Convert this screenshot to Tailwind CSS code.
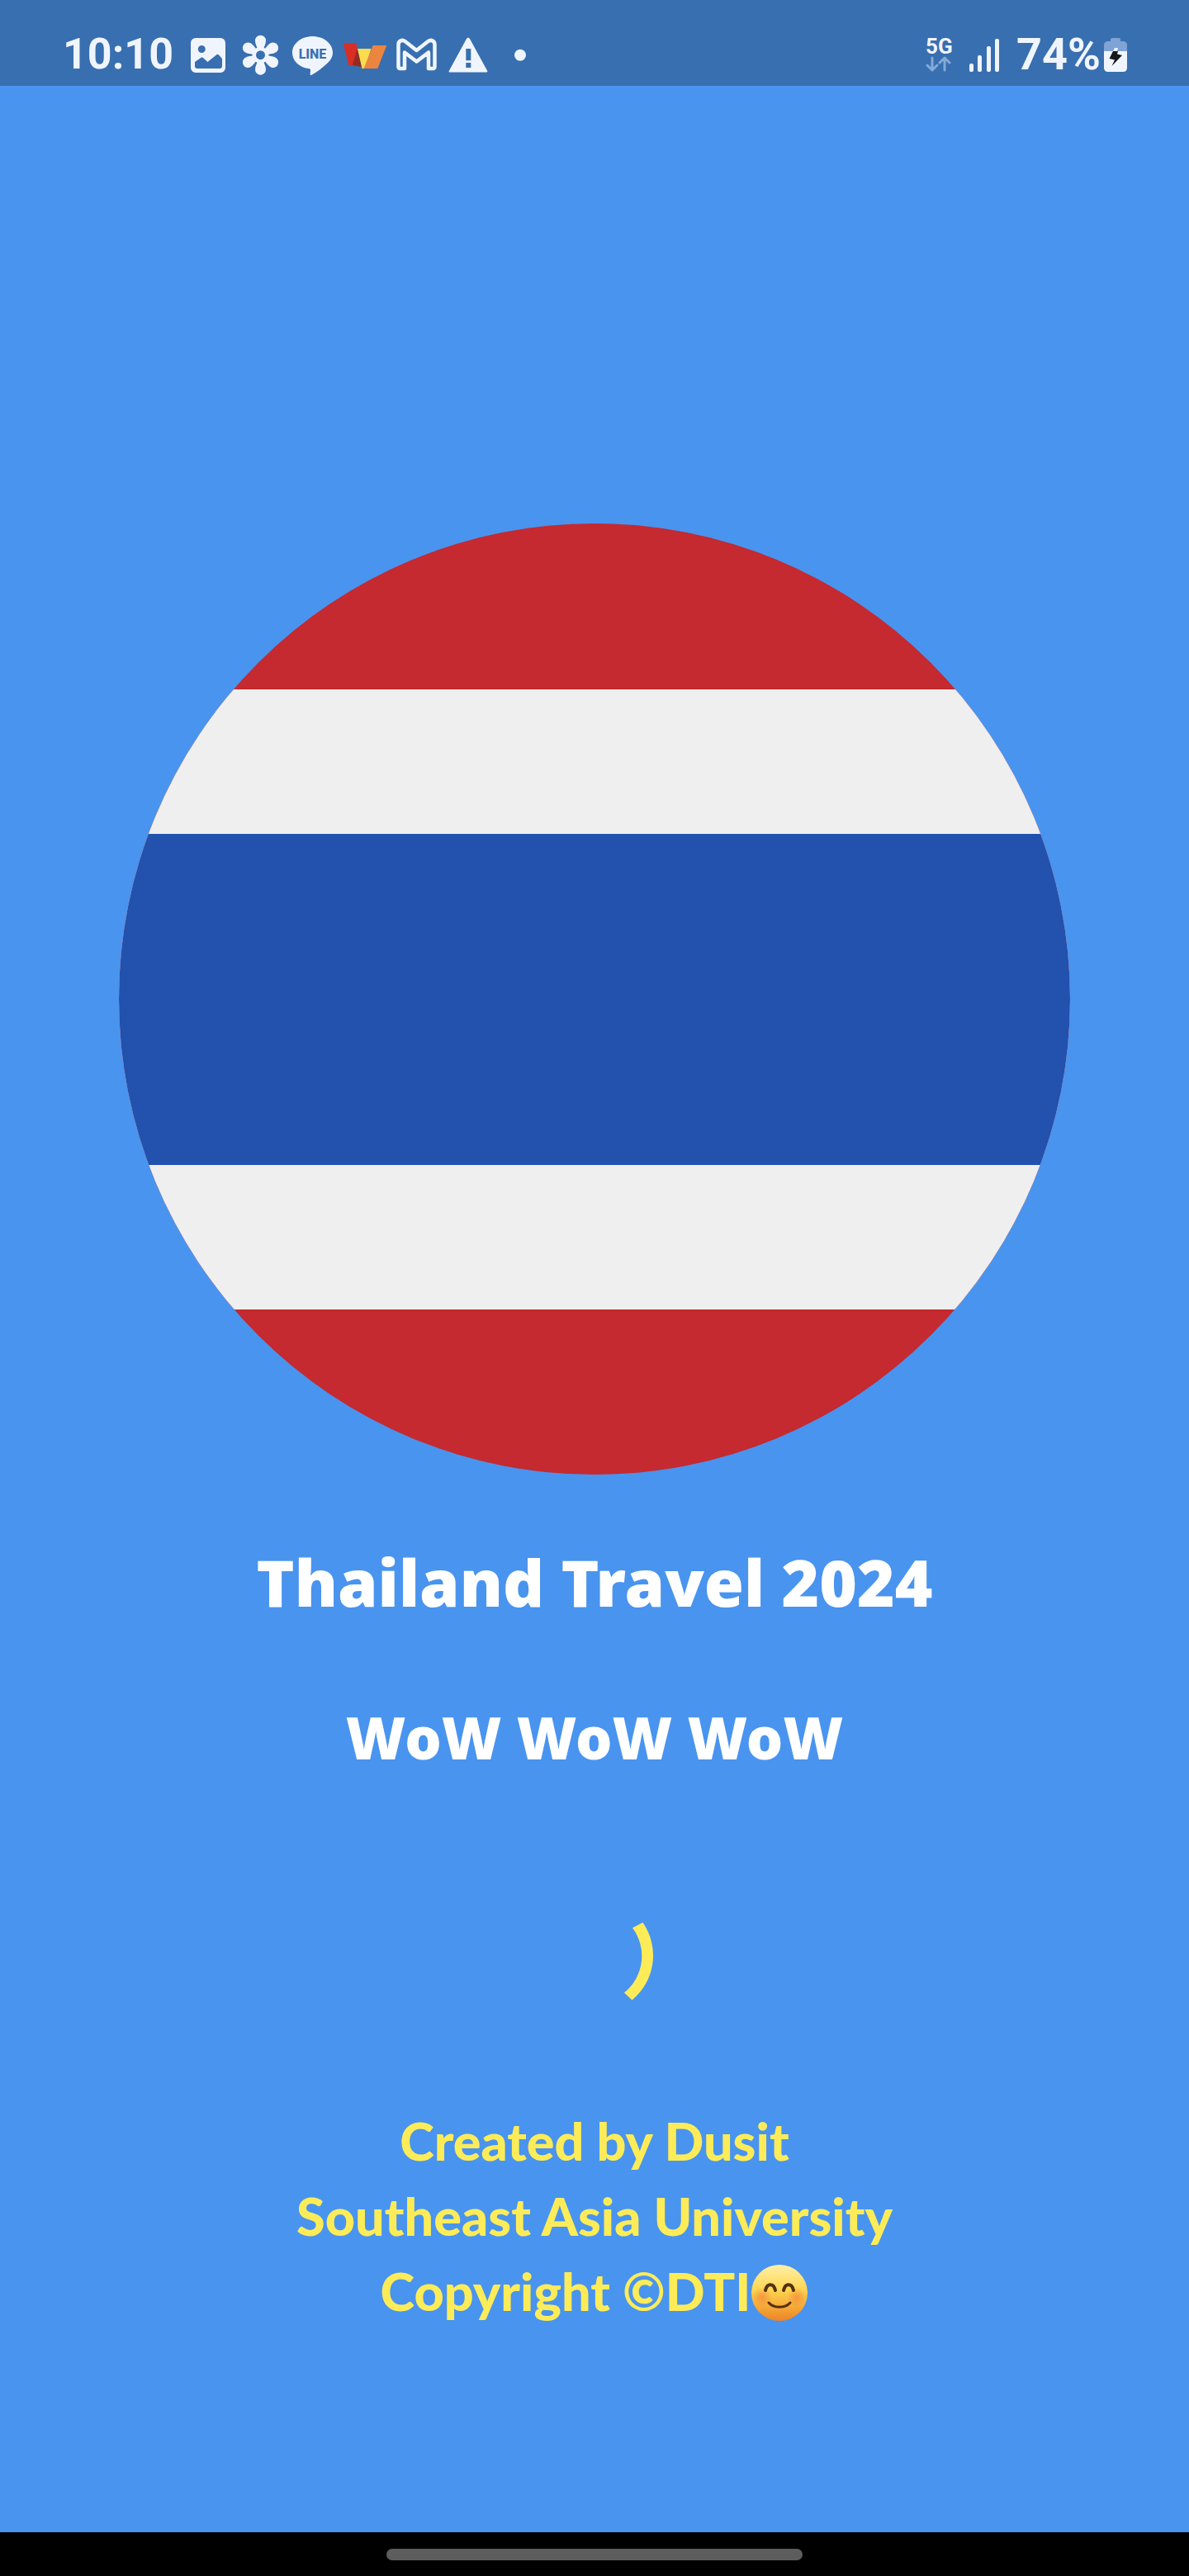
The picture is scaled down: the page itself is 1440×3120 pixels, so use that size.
<!DOCTYPE html>
<html lang="en">
<head>
<meta charset="utf-8">
<meta name="viewport" content="width=device-width, initial-scale=1">
<title>Thailand Travel 2024</title>
<script src="https://cdn.jsdelivr.net/npm/@tailwindcss/browser@4"></script>
</head>
<body class="flex min-h-screen flex-col bg-[#4994ef] font-['Noto_Sans',sans-serif]">
<header class="flex h-26 items-center justify-between bg-[#386fb0] pt-7 pr-[75px] pl-[76px] font-['Roboto',sans-serif] text-[#f0f5fd]">
  <div class="flex items-center">
    <time class="w-[148px] text-[52px] leading-14 font-bold">10:10</time>
    <div class="flex items-center gap-[7px]">
      <svg class="size-14" viewBox="0 0 56 56" fill="currentColor" aria-label="Gallery"><path fill-rule="evenodd" d="M13 8h30a6 6 0 0 1 6 6v30a6 6 0 0 1-6 6H13a6 6 0 0 1-6-6V14a6 6 0 0 1 6-6Zm7.300 9a4.500 4.500 0 1 0 0 9 4.500 4.500 0 0 0 0-9ZM12 37v5a3 3 0 0 0 3 3h27a3 3 0 0 0 3-3v-9l-4-4.500a2 2 0 0 0-3 0L27.500 37l-5-4.500a2.500 2.500 0 0 0-4 0Z"/></svg>
      <svg class="size-14" viewBox="0 0 56 56" fill="currentColor" aria-label="Photos">
        <g transform="translate(28.500 28.700)">
          <circle r="10"/>
          <path id="petal" d="M-3-6C-4-10-6.500-13-6.500-17.500a6.500 6.500 0 0 1 13 0C6.500-13 4-10 3-6Z"/>
          <use href="#petal" transform="rotate(60)"/><use href="#petal" transform="rotate(120)"/><use href="#petal" transform="rotate(180)"/><use href="#petal" transform="rotate(240)"/><use href="#petal" transform="rotate(300)"/>
          <circle r="5.500" fill="#386fb0"/>
        </g>
      </svg>
      <svg class="size-14" viewBox="0 0 56 56" fill="currentColor" aria-label="LINE"><path d="M28.500 6C42 6 53 14.800 53 25.700c0 5-2.500 9.300-7 13.300C40 44.500 33 50 27 53c-1.500.5-1.500-1-1.200-3 .6-4 .2-4.700-2.300-5C12 43.500 4 35.500 4 25.700 4 14.800 15 6 28.500 6Z"/><text x="28.500" y="33" text-anchor="middle" font-size="16" font-weight="800" fill="#386fb0">LINE</text></svg>
      <svg class="size-14" viewBox="0 0 56 56" aria-hidden="true"><path fill="#d92e26" d="M2.700 14H18l2 7-6 20H9.300Z"/><path fill="#fbdc4c" d="M20 21h16.500L29 45h-3.500Z"/><path fill="#ec8540" d="M38.700 17h16.600l-11 28H27.500Z"/><path fill="#9c2a1c" d="m19.700 21-6 20 11 2Z"/></svg>
      <svg class="size-14" viewBox="0 0 56 56" fill="none" stroke="currentColor" stroke-width="4.500" stroke-linejoin="round" aria-label="Gmail"><path d="M8.500 45H14V25.500l14.500 11 14.500-11V45h5.500a2 2 0 0 0 2-2V16c0-4.500-4.500-6.500-8-4l-14 11-14-11c-3.500-2.500-8-.5-8 4v27a2 2 0 0 0 2 2Z"/></svg>
      <svg class="size-14" viewBox="0 0 56 56" fill="currentColor" aria-label="Warning"><path fill-rule="evenodd" d="M26 9q2-3 4 0l21 38.500q1 2-1 2H6q-2 0-1-2ZM25.300 21v14.300h6V21Zm0 17v6h6v-6Z"/></svg>
      <svg class="size-14" viewBox="0 0 56 56" fill="currentColor" aria-hidden="true"><circle cx="28" cy="28.700" r="7"/></svg>
    </div>
  </div>
  <div class="flex items-center">
    <div class="flex w-[52px] flex-col">
      <span class="text-[26px] leading-6 font-bold">5G</span>
      <svg class="h-5 w-8" viewBox="0 0 32 20" fill="none" stroke="#85a9d8" stroke-width="3" stroke-linecap="round" stroke-linejoin="round" aria-hidden="true"><path d="M8 2v15M2 11l6 6 6-6M23 17V2m-6 6 6-6 6 6"/></svg>
    </div>
    <svg class="h-14 w-[58px]" viewBox="0 0 58 56" fill="currentColor" aria-label="Signal"><rect x="1" y="39" width="5" height="10" rx="2"/><rect x="11" y="29" width="5" height="20" rx="2"/><rect x="22" y="18" width="5" height="31" rx="2"/><rect x="32" y="9" width="5" height="40" rx="2"/></svg>
    <span class="text-[54px] leading-14 font-bold">74%</span>
    <svg class="ml-1 h-14 w-7" viewBox="0 0 28 56" aria-label="Battery charging"><path fill="#7fa3d4" d="M10 8h8q2 0 2 2v2h3q5 0 5 5v7H0v-7q0-5 5-5h3v-2q0-2 2-2Z"/><path fill="#f0f5fd" d="M0 24h11l2-4h4l-1 4h12v20q0 5-5 5H5q-5 0-5-5Z"/><path fill="#15181d" d="m11 24-4.500 9 6.500 1.500L9.500 42 22 29l-6-1.500 1-3.500Z"/></svg>
  </div>
</header>

<main class="flex flex-1 flex-col items-center pt-[530px] text-center">
  <svg class="w-4/5" viewBox="0 0 1152 1152" role="img" aria-label="Flag of Thailand">
    <clipPath id="disc"><circle cx="576" cy="576" r="576"/></clipPath>
    <g clip-path="url(#disc)"><path fill="#c42a30" d="M0 0h1152v1152H0z"/><path fill="#efefef" d="M0 201h1152v751H0z"/><path fill="#2251ae" d="M0 376h1152v401H0z"/></g>
  </svg>
  <h1 class="mt-[74px] text-[78px] leading-[112px] font-black text-white">Thailand Travel 2024</h1>
  <p class="mt-[76px] text-[70px] leading-[112px] font-black text-white">WoW WoW WoW</p>
  <svg class="mt-[137px] size-36" viewBox="0 0 144 144" fill="#fdec58" role="status" aria-label="Loading"><path d="M118 38 130.500 31.500A70 70 0 0 1 117.500 125.500L108 116.500A57 57 0 0 0 118 38Z"/></svg>
  <p class="mt-[106px] font-['Lato',sans-serif] text-[63px] leading-[91px] font-black text-[#fdec58]">Created by Dusit<br>Southeast Asia University<br>Copyright ©DTI<svg class="inline-block size-[70px] align-[-13px]" viewBox="0 0 70 70" role="img" aria-label="Smiling face">
    <defs><linearGradient id="skin" x1="0" y1="0" x2="0" y2="1"><stop offset="0" stop-color="#fff0a8"/><stop offset=".45" stop-color="#fdd550"/><stop offset="1" stop-color="#ee8425"/></linearGradient><radialGradient id="blush"><stop offset="0" stop-color="#f07838" stop-opacity=".6"/><stop offset="1" stop-color="#f07838" stop-opacity="0"/></radialGradient></defs>
    <circle cx="35" cy="35" r="34" fill="url(#skin)"/><circle cx="14" cy="40" r="12" fill="url(#blush)"/><circle cx="56" cy="40" r="12" fill="url(#blush)"/>
    <g fill="none" stroke="#54300f" stroke-linecap="round"><path stroke-width="4" d="M18 32c2-9 10-9 12 0M40 32c2-9 10-9 12 0"/><path stroke-width="3" d="M22 47c6 7 20 7 26 0"/></g>
  </svg></p>
</main>
<footer class="flex h-[53px] items-center justify-center bg-black"><div class="h-3.5 w-[35%] rounded-full bg-[#5d5d5d]"></div></footer>
</body>
</html>
